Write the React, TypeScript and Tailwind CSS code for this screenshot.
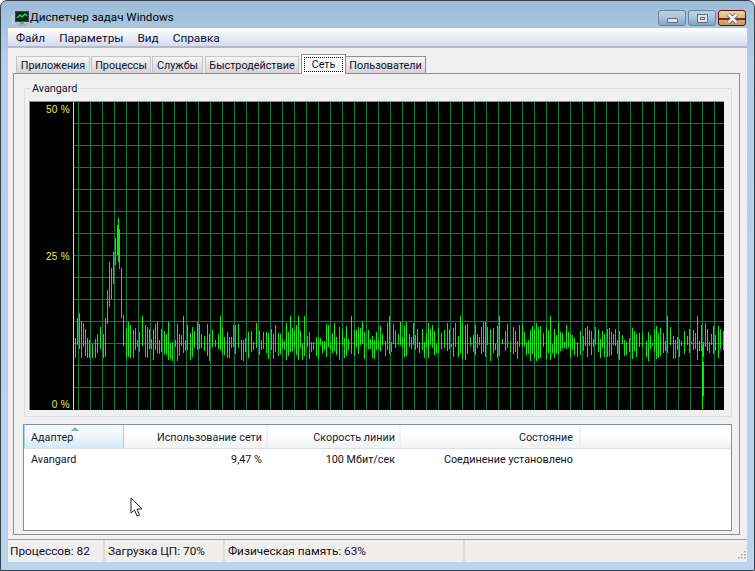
import React from 'react';

const font = { fontFamily: 'Roboto, "Noto Sans", sans-serif' };

// envelope of the start of the chart: [x, top of the spikes]
const peak: [number, number][] = [
  [74, 345], [76, 330], [78, 304], [81, 318], [84, 325], [88, 338], [92, 342], [96, 336], [100, 325],
  [103, 330], [105, 318], [107, 290], [109, 262], [111, 268], [113, 252], [115, 238], [118, 218],
  [120, 240], [122, 295], [124, 328], [128, 320], [132, 328], [136, 325],
];

function topAt(x: number) {
  for (let i = 0; i < peak.length - 1; i++) {
    const [x1, y1] = peak[i];
    const [x2, y2] = peak[i + 1];
    if (x >= x1 && x <= x2) return y1 + ((y2 - y1) * (x - x1)) / (x2 - x1);
  }
  return 0;
}

// the trace is drawn as a fence of short vertical strokes, one every 2-3 px
function buildLine() {
  let seed = 1337;
  const rnd = () => {
    seed = (seed * 16807) % 2147483647;
    return seed / 2147483647;
  };
  let d = 'M118.5 218V262';
  let x = 75;
  while (x < 724) {
    const inPeak = x > 104 && x < 122;
    let top: number;
    let bottom: number;
    if (x < 136) {
      top = topAt(x) + (inPeak ? 0 : rnd() * 5);
      bottom = inPeak ? top + 25 + rnd() * 30 : Math.min(top + 18 + rnd() * 28, 358);
    } else {
      top = 322 + rnd() * 22;
      if (rnd() > 0.96) top = 316;
      bottom = 344 + rnd() * 17;
    }
    d += `M${x + 0.5} ${Math.round(top)}V${Math.round(bottom)}`;
    x += inPeak ? 2 : rnd() > 0.75 ? 3 : 2;
  }
  // the single deep drop near the right edge
  d += 'M702.5 345V409M703.5 362V396';
  return d;
}

const linePath = buildLine();
const vLines = Array.from({ length: 54 }, (_, i) => 78 + i * 12);
const hLines = Array.from({ length: 13 }, (_, i) => 123 + i * 22);

function Graph() {
  return (
    <svg viewBox="30 102 694 308" className="block w-[694px] h-[308px] bg-black">
      <g stroke="#0b7d45" strokeWidth="1" shapeRendering="crispEdges">
        {vLines.map((x) => (
          <line key={x} x1={x + 0.5} y1="102" x2={x + 0.5} y2="410" />
        ))}
        {hLines.map((y) => (
          <line key={y} x1="74" y1={y + 0.5} x2="724" y2={y + 0.5} />
        ))}
      </g>
      <line x1="73.5" y1="102" x2="73.5" y2="410" stroke="#f5e43c" shapeRendering="crispEdges" />
      <path d={linePath} fill="none" stroke="#00f400" strokeWidth="1" shapeRendering="crispEdges" />
      <g fill="#f2e84a" fontSize="10" textAnchor="end" fontFamily="Liberation Sans, sans-serif" letterSpacing="0.3">
        <text x="70" y="113">50 %</text>
        <text x="70" y="260">25 %</text>
        <text x="70" y="408">0 %</text>
      </g>
    </svg>
  );
}

function AppIcon() {
  return (
    <svg width="17" height="17" viewBox="0 0 17 17" className="shrink-0">
      <rect x="3" y="1" width="14" height="11" fill="#3c4a50" />
      <rect x="4" y="2" width="12" height="9" fill="#0c2a20" />
      <path d="M5 8 L8 5 L10 7 L13 4 L15 6" stroke="#35e050" strokeWidth="1.4" fill="none" />
      <rect x="0" y="5" width="2" height="10" fill="#c8d0d2" />
      <rect x="8" y="12" width="4" height="2" fill="#8a9698" />
      <rect x="5" y="14" width="10" height="2" fill="#a8b2b4" />
    </svg>
  );
}

function CaptionButtons() {
  return (
    <div className="flex gap-[2px] pt-[9px] pr-[6px]">
      <div className="flex items-end justify-center pb-[2px] w-[28px] h-[16px] rounded-[3px] border border-[#6d8198] bg-gradient-to-b from-[#bcd2e8] via-[#a9c3dc] to-[#7ea3c6]">
        <div className="w-[11px] h-[5px] bg-[#dfe5ea] border border-[#5f6f80] rounded-[1px]" />
      </div>
      <div className="flex items-center justify-center w-[28px] h-[16px] rounded-[3px] border border-[#6d8198] bg-gradient-to-b from-[#bcd2e8] via-[#a9c3dc] to-[#7ea3c6]">
        <div className="w-[11px] h-[9px] bg-[#dfe5ea] border border-[#5f6f80] flex items-center justify-center">
          <div className="w-[5px] h-[3px] border border-[#5f6f80]" />
        </div>
      </div>
      <div className="relative flex items-center justify-center w-[28px] h-[16px] rounded-[3px] border border-[#5c0f14] bg-gradient-to-b from-[#ecd9a0] via-[#d9b878] to-[#c49a5c]">
        <div className="absolute left-0 right-0 top-[7px] h-[2px] bg-[#7c2a20]" />
        <svg width="13" height="11" viewBox="0 0 13 11" className="relative">
          <path d="M2.5 1.5 L10.5 9.5 M10.5 1.5 L2.5 9.5" stroke="#555" strokeWidth="4" />
          <path d="M2.5 1.5 L10.5 9.5 M10.5 1.5 L2.5 9.5" stroke="#f2f2f2" strokeWidth="2.6" />
        </svg>
      </div>
    </div>
  );
}

function Tabs() {
  const tab = 'h-[17px] flex items-center justify-center pt-[2px] border border-b-0 border-[#c4c4c4] bg-gradient-to-b from-[#f6f6f6] to-[#d4d4d4] text-[#101030]';
  return (
    <div className="flex items-end h-[20px] pl-[3px] relative z-10 text-[10.8px]">
      <div className={`${tab} w-[74px] mr-[1px]`}>Приложения</div>
      <div className={`${tab} w-[60px] mr-[1px]`}>Процессы</div>
      <div className={`${tab} w-[51px] mr-[2px]`}>Службы</div>
      <div className={`${tab} w-[94px] mr-[2px]`}>Быстродействие</div>
      <div className="h-[20px] w-[45px] mb-[-1px] pb-[1px] border border-b-0 border-[#8f8f8f] bg-white flex items-center justify-center">
        <span className="h-[15px] leading-[13px] w-[39px] text-center border border-dotted border-black text-[#101030]">Сеть</span>
      </div>
      <div className="h-[17px] w-[80px] flex items-center justify-center pt-[2px] border border-b-0 border-l-0 border-[#8f8f8f] bg-gradient-to-b from-[#f6f6f6] to-[#d4d4d4] text-[#101030]">Пользователи</div>
    </div>
  );
}

function AdapterTable() {
  const cell = 'flex items-center justify-end pt-[4px] border-r-2 border-[#eef0f2]';
  return (
    <div className="relative h-[107px] border border-[#8a8f94] bg-white text-[10.8px]">
      <div className="flex h-[24px] border-b border-[#dde0e4] bg-gradient-to-b from-white from-40% to-[#f0f2f5] text-[#1a1a30]">
        <div className="relative w-[100px] flex items-center pl-[6px] pt-[4px] border-r border-l border-[#9fd0ee] bg-gradient-to-b from-[#f2f9fd] from-40% to-[#d3e9f4]">
          Адаптер
          <svg width="8" height="4" viewBox="0 0 8 4" className="absolute left-[46px] top-[2px]">
            <path d="M0 4 L4 0 L8 4 Z" fill="#8aa8c4" />
          </svg>
        </div>
        <div className={`${cell} w-[144px] pr-[4px]`}>Использование сети</div>
        <div className={`${cell} w-[133px] pr-[4px]`}>Скорость линии</div>
        <div className={`${cell} w-[180px] pr-[6px]`}>Состояние</div>
      </div>
      <div className="flex h-[23px] items-center text-[#101020]">
        <div className="w-[100px] pl-[7px]">Avangard</div>
        <div className="w-[144px] text-right pr-[6px]">9,47 %</div>
        <div className="w-[133px] text-right pr-[6px]">100 Мбит/сек</div>
        <div className="w-[180px] text-right pr-[8px]">Соединение установлено</div>
      </div>
      {/* mouse pointer caught in the shot */}
      <svg width="14" height="21" viewBox="0 0 14 21" className="absolute left-[106px] top-[72px]">
        <path d="M1 1 L1 16 L4.5 13 L7 19 L9.5 18 L7 12 L12 12 Z" fill="#fff" stroke="#222" strokeWidth="1" />
      </svg>
    </div>
  );
}

function StatusBar() {
  const part = 'pt-[2px] h-full flex items-center border-r-2 border-[#dcdcd8]';
  return (
    <div className="flex h-[23px] items-center bg-[#f0efed] text-[#101020] text-[11.8px] border-t border-[#a0a0a0] relative">
      <div className={`${part} w-[97px] pl-[2px]`}>Процессов: 82</div>
      <div className={`${part} w-[120px] pl-[3px]`}>Загрузка ЦП: 70%</div>
      <div className={`${part} w-[240px] pl-[3px]`}>Физическая память: 63%</div>
      <svg width="10" height="10" viewBox="0 0 10 10" className="absolute right-[1px] bottom-[1px]" fill="#a8a8a8">
        <rect x="8" y="0" width="1.5" height="1.5" />
        <rect x="5" y="3" width="1.5" height="1.5" />
        <rect x="8" y="3" width="1.5" height="1.5" />
        <rect x="2" y="6" width="1.5" height="1.5" />
        <rect x="5" y="6" width="1.5" height="1.5" />
        <rect x="8" y="6" width="1.5" height="1.5" />
      </svg>
    </div>
  );
}

export default function App() {
  return (
    <div className="w-[755px] h-[571px] bg-white overflow-hidden text-[12px] leading-none" style={font}>
      <div className="w-[755px] h-[571px] flex flex-col rounded-t-[7px] border border-[#30404c] bg-gradient-to-b from-[#9fbcd8] via-[#b4cfe8] from-0% via-[60px] to-[#b9d4ec]">
        <div className="h-[27px] flex justify-between pl-[11px] pr-[2px] shrink-0">
          <div className="flex items-center gap-[1px] pt-[7px] text-black text-[11.6px]">
            <AppIcon />
            <span>Диспетчер задач Windows</span>
          </div>
          <CaptionButtons />
        </div>
        <div className="mx-[7px] flex-1 flex flex-col min-h-0 bg-[#f0f0f0]">
          <div className="h-[20px] flex items-center gap-[14px] pl-[8px] pt-[3px] text-[11.8px] text-[#101030] bg-gradient-to-b from-white to-[#d5dbee] border-b-2 border-[#b5b8c8]">
            <span>Файл</span>
            <span>Параметры</span>
            <span>Вид</span>
            <span>Справка</span>
          </div>
          <div className="flex-1 flex flex-col pt-[5px] pl-[5px] pr-[7px] pb-[3px]">
            <Tabs />
            <div className="h-[462px] border border-[#8f8f8f] bg-[#f0f0f0] pl-[10px] pr-[7px] pt-[14px]">
              <div className="relative h-[329px] border border-[#d8dfe6] rounded-[2px] pl-[5px] pt-[13px]">
                <span className="absolute left-[6px] top-[-5px] px-[1px] bg-[#f0f0f0] text-[#101030] text-[10.8px]">Avangard</span>
                <div className="border-l border-t border-[#8f8f8f] w-[694px] box-content ml-[-1px] mt-[-1px]">
                  <Graph />
                </div>
              </div>
              <div className="mt-[7px] ml-[-1px]">
                <AdapterTable />
              </div>
            </div>
          </div>
          <StatusBar />
        </div>
        <div className="h-[8px] shrink-0" />
      </div>
    </div>
  );
}
